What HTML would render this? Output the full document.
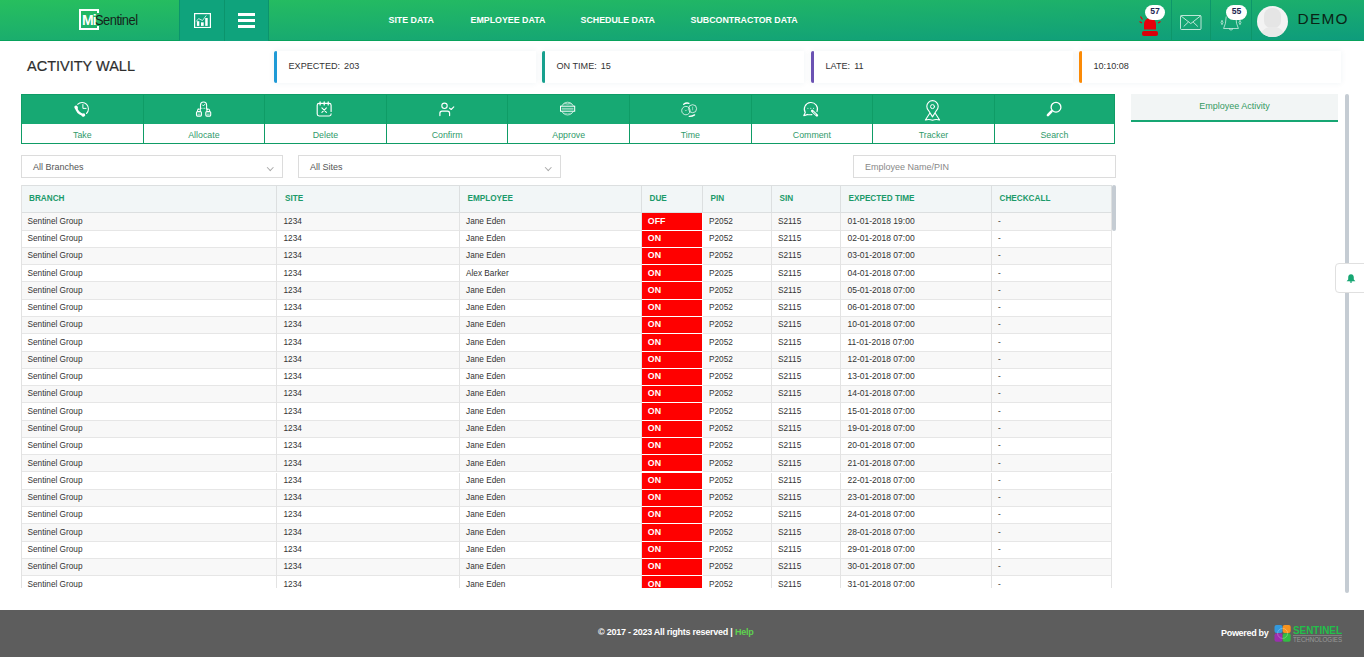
<!DOCTYPE html>
<html><head><meta charset="utf-8">
<style>
*{box-sizing:border-box;margin:0;padding:0}
html,body{width:1364px;height:657px;overflow:hidden;background:#fff;font-family:"Liberation Sans",sans-serif;color:#333}
.abs{position:absolute}
#hdr{position:absolute;left:0;top:0;width:1364px;height:41px;background:linear-gradient(to bottom right,#27bf5e 0%,#0e9c7c 100%);border-bottom:1px solid #08a25c}
.hbox{position:absolute;top:0;height:41px;background:#0fa37c;border-left:1px solid #0b946c}
.nav{position:absolute;top:13.9px;font-size:8.85px;font-weight:700;color:#fff;white-space:nowrap;line-height:12px}
.vdiv{position:absolute;top:0;width:1px;height:41px;background:#0d966a}
.badge{position:absolute;top:5px;height:15px;width:20px;border-radius:8px;background:#fff;color:#1b2450;font-weight:700;font-size:8.6px;text-align:center;line-height:12.5px}
#title{position:absolute;left:27px;top:56px;font-size:15.2px;color:#2e2e2e;-webkit-text-stroke:0.2px #2e2e2e;line-height:20px;white-space:nowrap;transform:scaleX(0.955);transform-origin:left top}
.card{position:absolute;top:51px;height:32px;width:262px;background:#fff;box-shadow:0 0 6px rgba(30,90,110,0.07)}
.card .bar{position:absolute;left:0;top:0;width:3px;height:32px;border-radius:2px 1px 1px 2px}
.card .t{position:absolute;left:14.5px;top:9px;font-size:9.1px;line-height:12px;color:#333;white-space:nowrap}
#tool{position:absolute;left:21px;top:94px;width:1094px;height:50px;border:1px solid #0f9c66}
.tc{position:absolute;top:0;height:48px;width:121.6px}
.tc .ic{position:absolute;left:0;top:0;right:0;height:29px;background:#17a973}
.tc .lb{position:absolute;left:0;right:0;top:33.5px;height:16px;text-align:center;font-size:8.8px;line-height:12px;color:#2f9a6a}
.tc .svgw{position:absolute;width:20px;height:24px}
.tc svg{display:block}
.chev{position:absolute;top:164.5px;width:4.5px;height:4.5px;border-right:1px solid #aaa;border-bottom:1px solid #aaa;transform:rotate(45deg)}
.sel{position:absolute;top:155px;height:23px;border:1px solid #dcdcdc;background:#fff;font-size:9px;line-height:22.5px;color:#555;padding-left:11px;white-space:nowrap}
#tbl{position:absolute;left:21px;top:184.5px;width:1090.5px;height:403.5px;overflow:hidden}
#tbl .lb{position:absolute;left:0;top:0;width:1px;height:403.5px;background:#e2e2e2;z-index:2}
.thead{position:absolute;left:0;top:0;width:1090.5px;height:28px;background:#f2f6f7;border-top:1px solid #dcdfe0;border-bottom:1px solid #dcdfe0}
.th{position:absolute;top:1px;height:27px;border-right:1px solid #dcdfe0;font-size:8.2px;font-weight:700;color:#1c9a6a;line-height:25px;padding-left:8px;white-space:nowrap}
.tr{position:absolute;left:0;width:1090.5px;height:17.28px;border-bottom:1px solid #e6e6e6;background:#fff}
.tr.odd{background:#f8f8f8}
.td{position:absolute;top:0;height:17.28px;border-right:1px solid #e3e3e3;font-size:8.25px;line-height:16px;color:#333;white-space:nowrap}
.td span{position:absolute;left:6.5px}
.td.due span{left:6.3px;margin-top:-1.00px}
.td.dt{font-size:8.5px}
.td.dt span{left:7px;margin-top:-1.005px}
.td.due{background:#ff0000;color:#fff;font-weight:700;font-size:8.8px;border-right:1px solid #fff;border-bottom:1px solid #fff}
#foot{position:absolute;left:0;top:610px;width:1364px;height:47px;background:#5d5d5d}
</style></head><body>

<div id="hdr">
  <!-- logo -->
  <div class="abs" style="left:79px;top:9px;width:20px;height:21px;border:2px solid #fff;border-right:none"></div>
  <div class="abs" style="left:97px;top:9px;width:2px;height:4px;background:#fff"></div>
  <div class="abs" style="left:97px;top:26px;width:2px;height:4px;background:#fff"></div>
  <div class="abs" style="left:82px;top:12px;font-size:14px;font-weight:700;color:#fff;line-height:16px;letter-spacing:-0.8px">Mi</div>
  <div class="abs" style="left:95px;top:12px;font-size:15px;color:#15241b;line-height:16px;letter-spacing:-0.6px;transform:scaleX(0.86);transform-origin:left top">Sentinel</div>

  <div class="hbox" style="left:179px;width:45px"></div>
  <div class="hbox" style="left:224px;width:45px;border-right:1px solid #0b946c"></div>
  <svg class="abs" style="left:194px;top:13px" width="17" height="15" viewBox="0 0 17 15">
    <rect x="0.6" y="0.6" width="15.8" height="13.9" fill="none" stroke="#fff" stroke-width="1.2"/>
    <rect x="2.9" y="8.2" width="2.4" height="4.7" fill="#fff"/><rect x="7" y="9.3" width="2.7" height="3.6" fill="#fff"/><rect x="11.2" y="5" width="2.5" height="7.9" fill="#fff"/>
    <path d="M2.2 8.5L4.6 5.6L8.5 7.5L12.3 2.4" fill="none" stroke="#fff" stroke-opacity="0.75" stroke-width="1"/>
  </svg>
  <div class="abs" style="left:238px;top:13px;width:17px;height:3px;background:#fff"></div>
  <div class="abs" style="left:238px;top:19px;width:17px;height:3px;background:#fff"></div>
  <div class="abs" style="left:238px;top:25px;width:17px;height:3px;background:#fff"></div>

  <div class="nav" style="left:388.5px">SITE DATA</div>
  <div class="nav" style="left:470.5px">EMPLOYEE DATA</div>
  <div class="nav" style="left:580.5px">SCHEDULE DATA</div>
  <div class="nav" style="left:690.5px">SUBCONTRACTOR DATA</div>

  <div class="vdiv" style="left:1170.5px"></div>
  <div class="vdiv" style="left:1210px"></div>
  <div class="vdiv" style="left:1251px"></div>

  <!-- siren -->
  <svg class="abs" style="left:1138px;top:15px" width="24" height="22" viewBox="0 0 24 22">
    <path d="M6 14.5V9a6 6 0 0 1 12 0v5.5z" fill="#e8000b"/>
    <rect x="4" y="16" width="16" height="5" rx="2" fill="#d9000a"/>
    <path d="M1.5 6.5L4 8M2.5 1.5L4.5 4.5M22.5 6.5L20 8" stroke="#e8000b" stroke-width="1.3"/>
  </svg>
  <div class="badge" style="left:1145px">57</div>

  <!-- mail -->
  <svg class="abs" style="left:1180px;top:14.5px" width="22" height="15" viewBox="0 0 22 15">
    <rect x="0.5" y="0.5" width="20.5" height="14" rx="1" fill="none" stroke="#fff" stroke-opacity="0.8" stroke-width="0.9"/>
    <path d="M0.8 0.8L10.75 8.6L20.7 0.8M3.7 11.5L8.4 7M17.8 11.5L13.1 7" fill="none" stroke="#fff" stroke-opacity="0.8" stroke-width="0.9"/>
  </svg>
  <!-- bell outline -->
  <svg class="abs" style="left:1220px;top:14px" width="22" height="20" viewBox="0 0 22 20">
    <path d="M6.2 2.5Q6 10 3.6 14.5H18.4Q16 10 15.8 2.5M9 14.8Q11 17.6 13 14.8" fill="none" stroke="#fff" stroke-opacity="0.7" stroke-width="0.9" stroke-linejoin="round"/>
    <path d="M2 6.3L3 8.5L2 10.7L1 8.5Z M20 6.3L21 8.5L20 10.7L19 8.5Z" fill="none" stroke="#fff" stroke-opacity="0.7" stroke-width="0.8"/>
  </svg>
  <div class="badge" style="left:1226px;width:21px">55</div>

  <!-- avatar -->
  <div class="abs" style="left:1257px;top:6px;width:31px;height:31px;border-radius:50%;background:#f3f3f3;overflow:hidden">
    <div class="abs" style="left:7px;top:2px;width:17px;height:20px;border-radius:8px 8px 7px 7px;background:#e5e5e5"></div>
    <div class="abs" style="left:3px;top:21px;width:25px;height:14px;border-radius:11px 11px 0 0;background:#e9e9e9"></div>
  </div>
  <div class="abs" style="left:1297.5px;top:10.9px;font-size:15.4px;line-height:16px;color:#0a2416;letter-spacing:1.3px;white-space:nowrap">DEMO</div>
</div>

<div id="title">ACTIVITY WALL</div>

<div class="card" style="left:274px"><div class="bar" style="background:#1f9ad6"></div><div class="t">EXPECTED:<span style="margin-left:1.5px"> </span>203</div></div>
<div class="card" style="left:542px"><div class="bar" style="background:#17a08e"></div><div class="t">ON TIME:<span style="margin-left:1.5px"> </span>15</div></div>
<div class="card" style="left:811px"><div class="bar" style="background:#6b52b3"></div><div class="t">LATE:<span style="margin-left:1.5px"> </span>11</div></div>
<div class="card" style="left:1079px"><div class="bar" style="background:#fb8a06"></div><div class="t">10:10:08</div></div>

<div id="tool">
  <div class="tc" style="left:0.00px;width:121.60px;border-right:1px solid #0f9c66;"><div class="ic"></div><div class="svgw" style="top:5.3px;left:50.67px"><svg width="20" height="20" viewBox="0 0 20 20"><path d="M4.6 4.3A6.1 6.1 0 1 1 13.5 13.5" fill="none" stroke="#fff" stroke-linecap="round" stroke-linejoin="round" stroke-width="1.05"/><path d="M9.9 4.5V8.4H13.1" fill="none" stroke="#fff" stroke-linecap="round" stroke-linejoin="round" stroke-width="1"/><path d="M3.2 7.8Q3.8 12.3 10 15" fill="none" stroke="#fff" stroke-linecap="round" stroke-linejoin="round" stroke-width="2.4"/><ellipse cx="3.1" cy="7.4" rx="1.7" ry="1.9" fill="#fff" transform="rotate(-30 3.1 7.4)"/><ellipse cx="10.4" cy="15.1" rx="1.9" ry="1.6" fill="#fff" transform="rotate(-30 10.4 15.1)"/></svg></div><div class="lb">Take</div></div>
<div class="tc" style="left:121.60px;width:121.60px;border-right:1px solid #0f9c66;"><div class="ic"></div><div class="svgw" style="top:5.3px;left:50.40px"><svg width="20" height="20" viewBox="0 0 20 20"><path d="M6.5 9.2V5A3.05 3.05 0 0 1 12.6 5V9.2" fill="none" stroke="#fff" stroke-linecap="round" stroke-linejoin="round" stroke-width="1.1"/><path d="M8.4 4.9L9.4 5.9L11 4.2" fill="none" stroke="#fff" stroke-linecap="round" stroke-linejoin="round" stroke-width="0.9"/><path d="M7.3 8.3H11.8" fill="none" stroke="#fff" stroke-width="0.8" stroke-dasharray="0.9 0.5"/><rect x="2.5" y="11.6" width="4.9" height="4.5" rx="1" fill="none" stroke="#fff" stroke-linecap="round" stroke-linejoin="round" stroke-width="1.1"/><rect x="3.6" y="9.2" width="2.7" height="2.4" rx="0.6" fill="none" stroke="#fff" stroke-linecap="round" stroke-linejoin="round" stroke-width="1"/><rect x="11.8" y="11.6" width="4.9" height="4.5" rx="1" fill="none" stroke="#fff" stroke-linecap="round" stroke-linejoin="round" stroke-width="1.1"/><rect x="12.9" y="9.2" width="2.7" height="2.4" rx="0.6" fill="none" stroke="#fff" stroke-linecap="round" stroke-linejoin="round" stroke-width="1"/><path d="M3.9 14.2H6M13.2 14.2H15.3" fill="none" stroke="#fff" stroke-linecap="round" stroke-linejoin="round" stroke-width="0.7"/></svg></div><div class="lb">Allocate</div></div>
<div class="tc" style="left:243.20px;width:121.60px;border-right:1px solid #0f9c66;"><div class="ic"></div><div class="svgw" style="top:5.3px;left:50.13px"><svg width="20" height="20" viewBox="0 0 20 20"><path d="M16.1 11.4V5.2Q16.1 3.3 14.2 3.3H4.1Q2.2 3.3 2.2 5.2V14.1Q2.2 16 4.1 16H14.2Q16.1 16 16.1 14.1V13.8" fill="none" stroke="#fff" stroke-linecap="round" stroke-linejoin="round" stroke-width="1.15"/><path d="M5.1 1.9V4.9M9.2 1.9V4.9M13.2 1.9V4.9" fill="none" stroke="#fff" stroke-linecap="round" stroke-linejoin="round" stroke-width="1.25"/><path d="M6.9 7.8L11.4 12.4M11.4 7.8L6.9 12.4" fill="none" stroke="#fff" stroke-linecap="round" stroke-linejoin="round" stroke-width="1.1"/></svg></div><div class="lb">Delete</div></div>
<div class="tc" style="left:364.80px;width:121.60px;border-right:1px solid #0f9c66;"><div class="ic"></div><div class="svgw" style="top:5.3px;left:49.87px"><svg width="20" height="20" viewBox="0 0 20 20"><circle cx="7.5" cy="5.8" r="2.7" fill="none" stroke="#fff" stroke-linecap="round" stroke-linejoin="round" stroke-width="1.1"/><path d="M2.9 15.6V13.2Q2.9 11.1 5 11.1H10.5Q12.6 11.1 12.6 13.2V15.6" fill="none" stroke="#fff" stroke-linecap="round" stroke-linejoin="round" stroke-width="1.2"/><path d="M12.5 8.1L14.2 9.5L16.8 6.9" fill="none" stroke="#fff" stroke-linecap="round" stroke-linejoin="round" stroke-width="1.1"/></svg></div><div class="lb">Confirm</div></div>
<div class="tc" style="left:486.40px;width:121.60px;border-right:1px solid #0f9c66;"><div class="ic"></div><div class="svgw" style="top:5.3px;left:49.60px"><svg width="20" height="20" viewBox="0 0 20 20"><circle cx="9.6" cy="8.6" r="6.4" fill="none" stroke="#fff" stroke-width="0.9" opacity="0.75"/><path d="M5.2 4.2Q9.6 2.6 14 4.2M5.2 13Q9.6 14.6 14 13M6.5 3.2Q9.6 6 12.7 3.2" fill="none" stroke="#fff" stroke-width="0.7" opacity="0.6"/><rect x="2.5" y="6.2" width="14.2" height="5" fill="#17a973" stroke="#fff" stroke-width="1"/><rect x="3.7" y="7.8" width="11.8" height="1.9" fill="#fff" opacity="0.5"/></svg></div><div class="lb">Approve</div></div>
<div class="tc" style="left:608.00px;width:121.60px;border-right:1px solid #0f9c66;"><div class="ic"></div><div class="svgw" style="top:5.3px;left:49.33px"><svg width="20" height="20" viewBox="0 0 20 20"><circle cx="6.9" cy="10.6" r="4.2" fill="none" stroke="#fff" stroke-width="0.9" opacity="0.85"/><circle cx="13.6" cy="8.7" r="4" fill="none" stroke="#fff" stroke-width="0.9" opacity="0.85"/><path d="M4.7 4.3Q7 2.4 10 3.3" fill="none" stroke="#fff" stroke-linecap="round" stroke-linejoin="round" stroke-width="1.3"/><path d="M10.2 16.3Q13.2 16.4 15.6 14.9" fill="none" stroke="#fff" stroke-linecap="round" stroke-linejoin="round" stroke-width="1.3"/><path d="M5.8 9.9L6.9 10.9L8 9.7M13.6 6.6V10.3" fill="none" stroke="#fff" stroke-width="0.7" opacity="0.7"/></svg></div><div class="lb">Time</div></div>
<div class="tc" style="left:729.60px;width:121.60px;border-right:1px solid #0f9c66;"><div class="ic"></div><div class="svgw" style="top:5.3px;left:49.06px"><svg width="20" height="20" viewBox="0 0 20 20"><path d="M16 11.6A6.6 6.6 0 1 0 4.3 12.6L2.8 15.6Q5 15.1 6.3 14.4Q8.2 15.1 10.9 14.6" fill="none" stroke="#fff" stroke-linecap="round" stroke-linejoin="round" stroke-width="1.1"/><circle cx="6.9" cy="8.3" r="0.55" fill="#fff"/><circle cx="9.8" cy="8.3" r="0.55" fill="#fff"/><circle cx="12.6" cy="8.3" r="0.55" fill="#fff"/><path d="M11.2 10.9L15.9 15.4" fill="none" stroke="#fff" stroke-linecap="round" stroke-linejoin="round" stroke-width="2.5"/><path d="M11.9 11.7L15 14.6" fill="none" stroke="#17a973" stroke-width="0.7"/></svg></div><div class="lb">Comment</div></div>
<div class="tc" style="left:851.20px;width:121.60px;border-right:1px solid #0f9c66;"><div class="ic"></div><div class="svgw" style="top:3.5px;left:48.80px"><svg width="20" height="24" viewBox="0 0 20 24"><path d="M10.5 17.9L6.4 11.3A5.7 5.7 0 1 1 14.6 11.3Z" fill="none" stroke="#fff" stroke-linecap="round" stroke-linejoin="round" stroke-width="1.1"/><circle cx="10.5" cy="7.6" r="2" fill="none" stroke="#fff" stroke-linecap="round" stroke-linejoin="round" stroke-width="1"/><path d="M7.6 14.5L3.4 21Q7 19.9 10.5 21.2Q14 19.9 17.6 21L13.4 14.5" fill="none" stroke="#fff" stroke-linecap="round" stroke-linejoin="round" stroke-width="1.1"/></svg></div><div class="lb">Tracker</div></div>
<div class="tc" style="left:972.80px;width:119.20px;"><div class="ic"></div><div class="svgw" style="top:5.3px;left:48.53px"><svg width="20" height="20" viewBox="0 0 20 20"><circle cx="13" cy="7.2" r="4.9" fill="none" stroke="#fff" stroke-linecap="round" stroke-linejoin="round" stroke-width="1.3"/><path d="M8.5 11.3L4.9 15.2" fill="none" stroke="#fff" stroke-linecap="round" stroke-linejoin="round" stroke-width="2.5"/></svg></div><div class="lb">Search</div></div>
</div>

<div class="sel" style="left:21px;width:262px">All Branches</div>
<div class="sel" style="left:298px;width:263px">All Sites</div>
<div class="sel" style="left:853px;width:263px;color:#888">Employee Name/PIN</div>

<div id="tbl">
  <div class="thead"></div><div class="lb"></div>
<div class="th" style="left:0px;width:256px">BRANCH</div>
<div class="th" style="left:256px;width:182.5px">SITE</div>
<div class="th" style="left:438.5px;width:182.0px">EMPLOYEE</div>
<div class="th" style="left:620.5px;width:61.0px">DUE</div>
<div class="th" style="left:681.5px;width:69.0px">PIN</div>
<div class="th" style="left:750.5px;width:69.0px">SIN</div>
<div class="th" style="left:819.5px;width:151.0px">EXPECTED TIME</div>
<div class="th" style="left:970.5px;width:120.0px">CHECKCALL</div>
<div class="tr odd" style="top:28.00px;height:18.08px">
<div class="td" style="left:0px;width:256px;height:18.08px"><span style="top:1.19px">Sentinel Group</span></div>
<div class="td" style="left:256px;width:182.5px;height:18.08px"><span style="top:1.19px">1234</span></div>
<div class="td" style="left:438.5px;width:182.0px;height:18.08px"><span style="top:1.19px">Jane Eden</span></div>
<div class="td due" style="left:620.5px;width:61.0px;height:18.08px"><span style="top:1.19px">OFF</span></div>
<div class="td" style="left:681.5px;width:69.0px;height:18.08px"><span style="top:1.19px">P2052</span></div>
<div class="td" style="left:750.5px;width:69.0px;height:18.08px"><span style="top:1.19px">S2115</span></div>
<div class="td dt" style="left:819.5px;width:151.0px;height:18.08px"><span style="top:1.19px">01-01-2018 19:00</span></div>
<div class="td" style="left:970.5px;width:120.0px;height:18.08px"><span style="top:1.19px">-</span></div>
</div>
<div class="tr" style="top:46.08px;height:17.28px">
<div class="td" style="left:0px;width:256px;height:17.28px"><span style="top:0.39px">Sentinel Group</span></div>
<div class="td" style="left:256px;width:182.5px;height:17.28px"><span style="top:0.39px">1234</span></div>
<div class="td" style="left:438.5px;width:182.0px;height:17.28px"><span style="top:0.39px">Jane Eden</span></div>
<div class="td due" style="left:620.5px;width:61.0px;height:17.28px"><span style="top:0.39px">ON</span></div>
<div class="td" style="left:681.5px;width:69.0px;height:17.28px"><span style="top:0.39px">P2052</span></div>
<div class="td" style="left:750.5px;width:69.0px;height:17.28px"><span style="top:0.39px">S2115</span></div>
<div class="td dt" style="left:819.5px;width:151.0px;height:17.28px"><span style="top:0.39px">02-01-2018 07:00</span></div>
<div class="td" style="left:970.5px;width:120.0px;height:17.28px"><span style="top:0.39px">-</span></div>
</div>
<div class="tr odd" style="top:63.36px;height:17.28px">
<div class="td" style="left:0px;width:256px;height:17.28px"><span style="top:0.39px">Sentinel Group</span></div>
<div class="td" style="left:256px;width:182.5px;height:17.28px"><span style="top:0.39px">1234</span></div>
<div class="td" style="left:438.5px;width:182.0px;height:17.28px"><span style="top:0.39px">Jane Eden</span></div>
<div class="td due" style="left:620.5px;width:61.0px;height:17.28px"><span style="top:0.39px">ON</span></div>
<div class="td" style="left:681.5px;width:69.0px;height:17.28px"><span style="top:0.39px">P2052</span></div>
<div class="td" style="left:750.5px;width:69.0px;height:17.28px"><span style="top:0.39px">S2115</span></div>
<div class="td dt" style="left:819.5px;width:151.0px;height:17.28px"><span style="top:0.39px">03-01-2018 07:00</span></div>
<div class="td" style="left:970.5px;width:120.0px;height:17.28px"><span style="top:0.39px">-</span></div>
</div>
<div class="tr" style="top:80.64px;height:17.28px">
<div class="td" style="left:0px;width:256px;height:17.28px"><span style="top:0.39px">Sentinel Group</span></div>
<div class="td" style="left:256px;width:182.5px;height:17.28px"><span style="top:0.39px">1234</span></div>
<div class="td" style="left:438.5px;width:182.0px;height:17.28px"><span style="top:0.39px">Alex Barker</span></div>
<div class="td due" style="left:620.5px;width:61.0px;height:17.28px"><span style="top:0.39px">ON</span></div>
<div class="td" style="left:681.5px;width:69.0px;height:17.28px"><span style="top:0.39px">P2025</span></div>
<div class="td" style="left:750.5px;width:69.0px;height:17.28px"><span style="top:0.39px">S2115</span></div>
<div class="td dt" style="left:819.5px;width:151.0px;height:17.28px"><span style="top:0.39px">04-01-2018 07:00</span></div>
<div class="td" style="left:970.5px;width:120.0px;height:17.28px"><span style="top:0.39px">-</span></div>
</div>
<div class="tr odd" style="top:97.92px;height:17.28px">
<div class="td" style="left:0px;width:256px;height:17.28px"><span style="top:0.39px">Sentinel Group</span></div>
<div class="td" style="left:256px;width:182.5px;height:17.28px"><span style="top:0.39px">1234</span></div>
<div class="td" style="left:438.5px;width:182.0px;height:17.28px"><span style="top:0.39px">Jane Eden</span></div>
<div class="td due" style="left:620.5px;width:61.0px;height:17.28px"><span style="top:0.39px">ON</span></div>
<div class="td" style="left:681.5px;width:69.0px;height:17.28px"><span style="top:0.39px">P2052</span></div>
<div class="td" style="left:750.5px;width:69.0px;height:17.28px"><span style="top:0.39px">S2115</span></div>
<div class="td dt" style="left:819.5px;width:151.0px;height:17.28px"><span style="top:0.39px">05-01-2018 07:00</span></div>
<div class="td" style="left:970.5px;width:120.0px;height:17.28px"><span style="top:0.39px">-</span></div>
</div>
<div class="tr" style="top:115.20px;height:17.28px">
<div class="td" style="left:0px;width:256px;height:17.28px"><span style="top:0.39px">Sentinel Group</span></div>
<div class="td" style="left:256px;width:182.5px;height:17.28px"><span style="top:0.39px">1234</span></div>
<div class="td" style="left:438.5px;width:182.0px;height:17.28px"><span style="top:0.39px">Jane Eden</span></div>
<div class="td due" style="left:620.5px;width:61.0px;height:17.28px"><span style="top:0.39px">ON</span></div>
<div class="td" style="left:681.5px;width:69.0px;height:17.28px"><span style="top:0.39px">P2052</span></div>
<div class="td" style="left:750.5px;width:69.0px;height:17.28px"><span style="top:0.39px">S2115</span></div>
<div class="td dt" style="left:819.5px;width:151.0px;height:17.28px"><span style="top:0.39px">06-01-2018 07:00</span></div>
<div class="td" style="left:970.5px;width:120.0px;height:17.28px"><span style="top:0.39px">-</span></div>
</div>
<div class="tr odd" style="top:132.48px;height:17.28px">
<div class="td" style="left:0px;width:256px;height:17.28px"><span style="top:0.39px">Sentinel Group</span></div>
<div class="td" style="left:256px;width:182.5px;height:17.28px"><span style="top:0.39px">1234</span></div>
<div class="td" style="left:438.5px;width:182.0px;height:17.28px"><span style="top:0.39px">Jane Eden</span></div>
<div class="td due" style="left:620.5px;width:61.0px;height:17.28px"><span style="top:0.39px">ON</span></div>
<div class="td" style="left:681.5px;width:69.0px;height:17.28px"><span style="top:0.39px">P2052</span></div>
<div class="td" style="left:750.5px;width:69.0px;height:17.28px"><span style="top:0.39px">S2115</span></div>
<div class="td dt" style="left:819.5px;width:151.0px;height:17.28px"><span style="top:0.39px">10-01-2018 07:00</span></div>
<div class="td" style="left:970.5px;width:120.0px;height:17.28px"><span style="top:0.39px">-</span></div>
</div>
<div class="tr" style="top:149.76px;height:17.28px">
<div class="td" style="left:0px;width:256px;height:17.28px"><span style="top:0.39px">Sentinel Group</span></div>
<div class="td" style="left:256px;width:182.5px;height:17.28px"><span style="top:0.39px">1234</span></div>
<div class="td" style="left:438.5px;width:182.0px;height:17.28px"><span style="top:0.39px">Jane Eden</span></div>
<div class="td due" style="left:620.5px;width:61.0px;height:17.28px"><span style="top:0.39px">ON</span></div>
<div class="td" style="left:681.5px;width:69.0px;height:17.28px"><span style="top:0.39px">P2052</span></div>
<div class="td" style="left:750.5px;width:69.0px;height:17.28px"><span style="top:0.39px">S2115</span></div>
<div class="td dt" style="left:819.5px;width:151.0px;height:17.28px"><span style="top:0.39px">11-01-2018 07:00</span></div>
<div class="td" style="left:970.5px;width:120.0px;height:17.28px"><span style="top:0.39px">-</span></div>
</div>
<div class="tr odd" style="top:167.04px;height:17.28px">
<div class="td" style="left:0px;width:256px;height:17.28px"><span style="top:0.39px">Sentinel Group</span></div>
<div class="td" style="left:256px;width:182.5px;height:17.28px"><span style="top:0.39px">1234</span></div>
<div class="td" style="left:438.5px;width:182.0px;height:17.28px"><span style="top:0.39px">Jane Eden</span></div>
<div class="td due" style="left:620.5px;width:61.0px;height:17.28px"><span style="top:0.39px">ON</span></div>
<div class="td" style="left:681.5px;width:69.0px;height:17.28px"><span style="top:0.39px">P2052</span></div>
<div class="td" style="left:750.5px;width:69.0px;height:17.28px"><span style="top:0.39px">S2115</span></div>
<div class="td dt" style="left:819.5px;width:151.0px;height:17.28px"><span style="top:0.39px">12-01-2018 07:00</span></div>
<div class="td" style="left:970.5px;width:120.0px;height:17.28px"><span style="top:0.39px">-</span></div>
</div>
<div class="tr" style="top:184.32px;height:17.28px">
<div class="td" style="left:0px;width:256px;height:17.28px"><span style="top:0.39px">Sentinel Group</span></div>
<div class="td" style="left:256px;width:182.5px;height:17.28px"><span style="top:0.39px">1234</span></div>
<div class="td" style="left:438.5px;width:182.0px;height:17.28px"><span style="top:0.39px">Jane Eden</span></div>
<div class="td due" style="left:620.5px;width:61.0px;height:17.28px"><span style="top:0.39px">ON</span></div>
<div class="td" style="left:681.5px;width:69.0px;height:17.28px"><span style="top:0.39px">P2052</span></div>
<div class="td" style="left:750.5px;width:69.0px;height:17.28px"><span style="top:0.39px">S2115</span></div>
<div class="td dt" style="left:819.5px;width:151.0px;height:17.28px"><span style="top:0.39px">13-01-2018 07:00</span></div>
<div class="td" style="left:970.5px;width:120.0px;height:17.28px"><span style="top:0.39px">-</span></div>
</div>
<div class="tr odd" style="top:201.60px;height:17.28px">
<div class="td" style="left:0px;width:256px;height:17.28px"><span style="top:0.39px">Sentinel Group</span></div>
<div class="td" style="left:256px;width:182.5px;height:17.28px"><span style="top:0.39px">1234</span></div>
<div class="td" style="left:438.5px;width:182.0px;height:17.28px"><span style="top:0.39px">Jane Eden</span></div>
<div class="td due" style="left:620.5px;width:61.0px;height:17.28px"><span style="top:0.39px">ON</span></div>
<div class="td" style="left:681.5px;width:69.0px;height:17.28px"><span style="top:0.39px">P2052</span></div>
<div class="td" style="left:750.5px;width:69.0px;height:17.28px"><span style="top:0.39px">S2115</span></div>
<div class="td dt" style="left:819.5px;width:151.0px;height:17.28px"><span style="top:0.39px">14-01-2018 07:00</span></div>
<div class="td" style="left:970.5px;width:120.0px;height:17.28px"><span style="top:0.39px">-</span></div>
</div>
<div class="tr" style="top:218.88px;height:17.28px">
<div class="td" style="left:0px;width:256px;height:17.28px"><span style="top:0.39px">Sentinel Group</span></div>
<div class="td" style="left:256px;width:182.5px;height:17.28px"><span style="top:0.39px">1234</span></div>
<div class="td" style="left:438.5px;width:182.0px;height:17.28px"><span style="top:0.39px">Jane Eden</span></div>
<div class="td due" style="left:620.5px;width:61.0px;height:17.28px"><span style="top:0.39px">ON</span></div>
<div class="td" style="left:681.5px;width:69.0px;height:17.28px"><span style="top:0.39px">P2052</span></div>
<div class="td" style="left:750.5px;width:69.0px;height:17.28px"><span style="top:0.39px">S2115</span></div>
<div class="td dt" style="left:819.5px;width:151.0px;height:17.28px"><span style="top:0.39px">15-01-2018 07:00</span></div>
<div class="td" style="left:970.5px;width:120.0px;height:17.28px"><span style="top:0.39px">-</span></div>
</div>
<div class="tr odd" style="top:236.16px;height:17.28px">
<div class="td" style="left:0px;width:256px;height:17.28px"><span style="top:0.39px">Sentinel Group</span></div>
<div class="td" style="left:256px;width:182.5px;height:17.28px"><span style="top:0.39px">1234</span></div>
<div class="td" style="left:438.5px;width:182.0px;height:17.28px"><span style="top:0.39px">Jane Eden</span></div>
<div class="td due" style="left:620.5px;width:61.0px;height:17.28px"><span style="top:0.39px">ON</span></div>
<div class="td" style="left:681.5px;width:69.0px;height:17.28px"><span style="top:0.39px">P2052</span></div>
<div class="td" style="left:750.5px;width:69.0px;height:17.28px"><span style="top:0.39px">S2115</span></div>
<div class="td dt" style="left:819.5px;width:151.0px;height:17.28px"><span style="top:0.39px">19-01-2018 07:00</span></div>
<div class="td" style="left:970.5px;width:120.0px;height:17.28px"><span style="top:0.39px">-</span></div>
</div>
<div class="tr" style="top:253.44px;height:17.28px">
<div class="td" style="left:0px;width:256px;height:17.28px"><span style="top:0.39px">Sentinel Group</span></div>
<div class="td" style="left:256px;width:182.5px;height:17.28px"><span style="top:0.39px">1234</span></div>
<div class="td" style="left:438.5px;width:182.0px;height:17.28px"><span style="top:0.39px">Jane Eden</span></div>
<div class="td due" style="left:620.5px;width:61.0px;height:17.28px"><span style="top:0.39px">ON</span></div>
<div class="td" style="left:681.5px;width:69.0px;height:17.28px"><span style="top:0.39px">P2052</span></div>
<div class="td" style="left:750.5px;width:69.0px;height:17.28px"><span style="top:0.39px">S2115</span></div>
<div class="td dt" style="left:819.5px;width:151.0px;height:17.28px"><span style="top:0.39px">20-01-2018 07:00</span></div>
<div class="td" style="left:970.5px;width:120.0px;height:17.28px"><span style="top:0.39px">-</span></div>
</div>
<div class="tr odd" style="top:270.72px;height:17.28px">
<div class="td" style="left:0px;width:256px;height:17.28px"><span style="top:0.39px">Sentinel Group</span></div>
<div class="td" style="left:256px;width:182.5px;height:17.28px"><span style="top:0.39px">1234</span></div>
<div class="td" style="left:438.5px;width:182.0px;height:17.28px"><span style="top:0.39px">Jane Eden</span></div>
<div class="td due" style="left:620.5px;width:61.0px;height:17.28px"><span style="top:0.39px">ON</span></div>
<div class="td" style="left:681.5px;width:69.0px;height:17.28px"><span style="top:0.39px">P2052</span></div>
<div class="td" style="left:750.5px;width:69.0px;height:17.28px"><span style="top:0.39px">S2115</span></div>
<div class="td dt" style="left:819.5px;width:151.0px;height:17.28px"><span style="top:0.39px">21-01-2018 07:00</span></div>
<div class="td" style="left:970.5px;width:120.0px;height:17.28px"><span style="top:0.39px">-</span></div>
</div>
<div class="tr" style="top:288.00px;height:17.28px">
<div class="td" style="left:0px;width:256px;height:17.28px"><span style="top:0.39px">Sentinel Group</span></div>
<div class="td" style="left:256px;width:182.5px;height:17.28px"><span style="top:0.39px">1234</span></div>
<div class="td" style="left:438.5px;width:182.0px;height:17.28px"><span style="top:0.39px">Jane Eden</span></div>
<div class="td due" style="left:620.5px;width:61.0px;height:17.28px"><span style="top:0.39px">ON</span></div>
<div class="td" style="left:681.5px;width:69.0px;height:17.28px"><span style="top:0.39px">P2052</span></div>
<div class="td" style="left:750.5px;width:69.0px;height:17.28px"><span style="top:0.39px">S2115</span></div>
<div class="td dt" style="left:819.5px;width:151.0px;height:17.28px"><span style="top:0.39px">22-01-2018 07:00</span></div>
<div class="td" style="left:970.5px;width:120.0px;height:17.28px"><span style="top:0.39px">-</span></div>
</div>
<div class="tr odd" style="top:305.28px;height:17.28px">
<div class="td" style="left:0px;width:256px;height:17.28px"><span style="top:0.39px">Sentinel Group</span></div>
<div class="td" style="left:256px;width:182.5px;height:17.28px"><span style="top:0.39px">1234</span></div>
<div class="td" style="left:438.5px;width:182.0px;height:17.28px"><span style="top:0.39px">Jane Eden</span></div>
<div class="td due" style="left:620.5px;width:61.0px;height:17.28px"><span style="top:0.39px">ON</span></div>
<div class="td" style="left:681.5px;width:69.0px;height:17.28px"><span style="top:0.39px">P2052</span></div>
<div class="td" style="left:750.5px;width:69.0px;height:17.28px"><span style="top:0.39px">S2115</span></div>
<div class="td dt" style="left:819.5px;width:151.0px;height:17.28px"><span style="top:0.39px">23-01-2018 07:00</span></div>
<div class="td" style="left:970.5px;width:120.0px;height:17.28px"><span style="top:0.39px">-</span></div>
</div>
<div class="tr" style="top:322.56px;height:17.28px">
<div class="td" style="left:0px;width:256px;height:17.28px"><span style="top:0.39px">Sentinel Group</span></div>
<div class="td" style="left:256px;width:182.5px;height:17.28px"><span style="top:0.39px">1234</span></div>
<div class="td" style="left:438.5px;width:182.0px;height:17.28px"><span style="top:0.39px">Jane Eden</span></div>
<div class="td due" style="left:620.5px;width:61.0px;height:17.28px"><span style="top:0.39px">ON</span></div>
<div class="td" style="left:681.5px;width:69.0px;height:17.28px"><span style="top:0.39px">P2052</span></div>
<div class="td" style="left:750.5px;width:69.0px;height:17.28px"><span style="top:0.39px">S2115</span></div>
<div class="td dt" style="left:819.5px;width:151.0px;height:17.28px"><span style="top:0.39px">24-01-2018 07:00</span></div>
<div class="td" style="left:970.5px;width:120.0px;height:17.28px"><span style="top:0.39px">-</span></div>
</div>
<div class="tr odd" style="top:339.84px;height:17.28px">
<div class="td" style="left:0px;width:256px;height:17.28px"><span style="top:0.39px">Sentinel Group</span></div>
<div class="td" style="left:256px;width:182.5px;height:17.28px"><span style="top:0.39px">1234</span></div>
<div class="td" style="left:438.5px;width:182.0px;height:17.28px"><span style="top:0.39px">Jane Eden</span></div>
<div class="td due" style="left:620.5px;width:61.0px;height:17.28px"><span style="top:0.39px">ON</span></div>
<div class="td" style="left:681.5px;width:69.0px;height:17.28px"><span style="top:0.39px">P2052</span></div>
<div class="td" style="left:750.5px;width:69.0px;height:17.28px"><span style="top:0.39px">S2115</span></div>
<div class="td dt" style="left:819.5px;width:151.0px;height:17.28px"><span style="top:0.39px">28-01-2018 07:00</span></div>
<div class="td" style="left:970.5px;width:120.0px;height:17.28px"><span style="top:0.39px">-</span></div>
</div>
<div class="tr" style="top:357.12px;height:17.28px">
<div class="td" style="left:0px;width:256px;height:17.28px"><span style="top:0.39px">Sentinel Group</span></div>
<div class="td" style="left:256px;width:182.5px;height:17.28px"><span style="top:0.39px">1234</span></div>
<div class="td" style="left:438.5px;width:182.0px;height:17.28px"><span style="top:0.39px">Jane Eden</span></div>
<div class="td due" style="left:620.5px;width:61.0px;height:17.28px"><span style="top:0.39px">ON</span></div>
<div class="td" style="left:681.5px;width:69.0px;height:17.28px"><span style="top:0.39px">P2052</span></div>
<div class="td" style="left:750.5px;width:69.0px;height:17.28px"><span style="top:0.39px">S2115</span></div>
<div class="td dt" style="left:819.5px;width:151.0px;height:17.28px"><span style="top:0.39px">29-01-2018 07:00</span></div>
<div class="td" style="left:970.5px;width:120.0px;height:17.28px"><span style="top:0.39px">-</span></div>
</div>
<div class="tr odd" style="top:374.40px;height:17.28px">
<div class="td" style="left:0px;width:256px;height:17.28px"><span style="top:0.39px">Sentinel Group</span></div>
<div class="td" style="left:256px;width:182.5px;height:17.28px"><span style="top:0.39px">1234</span></div>
<div class="td" style="left:438.5px;width:182.0px;height:17.28px"><span style="top:0.39px">Jane Eden</span></div>
<div class="td due" style="left:620.5px;width:61.0px;height:17.28px"><span style="top:0.39px">ON</span></div>
<div class="td" style="left:681.5px;width:69.0px;height:17.28px"><span style="top:0.39px">P2052</span></div>
<div class="td" style="left:750.5px;width:69.0px;height:17.28px"><span style="top:0.39px">S2115</span></div>
<div class="td dt" style="left:819.5px;width:151.0px;height:17.28px"><span style="top:0.39px">30-01-2018 07:00</span></div>
<div class="td" style="left:970.5px;width:120.0px;height:17.28px"><span style="top:0.39px">-</span></div>
</div>
<div class="tr" style="top:391.68px;height:17.28px">
<div class="td" style="left:0px;width:256px;height:17.28px"><span style="top:0.39px">Sentinel Group</span></div>
<div class="td" style="left:256px;width:182.5px;height:17.28px"><span style="top:0.39px">1234</span></div>
<div class="td" style="left:438.5px;width:182.0px;height:17.28px"><span style="top:0.39px">Jane Eden</span></div>
<div class="td due" style="left:620.5px;width:61.0px;height:17.28px"><span style="top:0.39px">ON</span></div>
<div class="td" style="left:681.5px;width:69.0px;height:17.28px"><span style="top:0.39px">P2052</span></div>
<div class="td" style="left:750.5px;width:69.0px;height:17.28px"><span style="top:0.39px">S2115</span></div>
<div class="td dt" style="left:819.5px;width:151.0px;height:17.28px"><span style="top:0.39px">31-01-2018 07:00</span></div>
<div class="td" style="left:970.5px;width:120.0px;height:17.28px"><span style="top:0.39px">-</span></div>
</div>
</div>

<div class="sel" style="display:none"></div>
<div class="chev" style="left:267.5px"></div>
<div class="chev" style="left:545.5px"></div>

<!-- table scrollbar thumb -->
<div class="abs" style="left:1112px;top:185px;width:4px;height:45.5px;border-radius:2px;background:#c5ccd3"></div>

<!-- right panel -->
<div class="abs" style="left:1131px;top:94px;width:207px;height:28px;background:#f2f5f5;border-bottom:2.5px solid #17a673"></div>
<div class="abs" style="left:1131px;top:100px;width:207px;text-align:center;font-size:9px;line-height:12px;color:#359a62;white-space:nowrap">Employee Activity</div>
<div class="abs" style="left:1345px;top:94px;width:4px;height:498.5px;border-radius:2px;background:#c5ccd3"></div>

<!-- bell button -->
<div class="abs" style="left:1335px;top:263px;width:40px;height:29.5px;border:1px solid #e0e0e0;border-radius:4px;background:#fff">
  <svg class="abs" style="left:9.5px;top:9.5px" width="10" height="9" viewBox="0 0 10 9"><path d="M5 0.3C3 0.3 2.2 2 2.2 3.6V5.6L0.6 7.2H9.4L7.8 5.6V3.6C7.8 2 7 0.3 5 0.3ZM3.8 7.6A1.2 1.2 0 0 0 6.2 7.6Z" fill="#17a673"/></svg>
</div>

<div id="foot">
  <div class="abs" style="left:598px;top:16px;font-size:9px;line-height:12px;color:#fff;white-space:nowrap;font-weight:700;letter-spacing:-0.25px">© 2017 - 2023 All rights reserved | <span style="color:#5fd34f">Help</span></div>
  <div class="abs" style="left:1221px;top:17px;font-size:9px;line-height:12px;color:#fff;white-space:nowrap;font-weight:700;letter-spacing:-0.3px">Powered by</div>
  <svg class="abs" style="left:1274px;top:15px" width="18" height="17" viewBox="0 0 18 17">
    <rect x="0.5" y="0" width="8" height="8" rx="2" fill="#3399dd"/>
    <rect x="8.7" y="0" width="8" height="8" rx="2" fill="#f7931e"/>
    <rect x="0.5" y="8.3" width="8" height="8.4" rx="2" fill="#9b2fae"/>
    <rect x="8.7" y="8.3" width="8" height="8.4" rx="2" fill="#33bb44"/>
    <circle cx="8.6" cy="8.4" r="5" fill="none" stroke="#fff" stroke-width="0.5" opacity="0.5"/>
  </svg>
  <div class="abs" style="left:1292.5px;top:13.5px;font-size:11px;line-height:12px;color:#22c04a;white-space:nowrap;font-weight:700;transform:scaleX(0.9);transform-origin:left top">SENTINEL</div>
  <div class="abs" style="left:1292.5px;top:24.5px;width:49.5px;height:1px;background:#7f7f7f"></div>
  <div class="abs" style="left:1292.5px;top:26.3px;font-size:7.2px;line-height:7px;color:#9a9a9a;white-space:nowrap;transform:scaleX(0.86);transform-origin:left top">TECHNOLOGIES</div>
</div>
</body></html>
